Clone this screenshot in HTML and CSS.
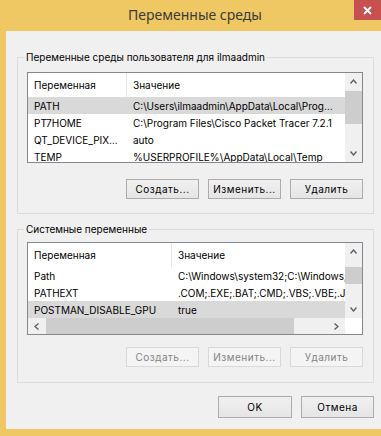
FILE: index.html
```html
<!DOCTYPE html>
<html>
<head>
    <title>Переменные среды</title>
    <link rel="stylesheet" href="styles.css">
</head>
<body>
    <div class="window">
        <div class="titlebar">
            <div class="title">Переменные среды</div>
            <div class="close">
                <svg width="9" height="9" viewBox="0 0 9 9"><path d="M1 1L8 8M8 1L1 8" stroke="#fff" stroke-width="1.8"/></svg>
            </div>
        </div>
        <div class="client">
            <fieldset class="group group-user">
                <legend>Переменные среды пользователя для ilmaadmin</legend>
                <div class="list list-user">
                    <div class="list-main">
                        <div class="list-body">
                            <div class="row head"><span class="c1">Переменная</span><span class="c2">Значение</span></div>
                            <div class="row selected"><span class="c1">PATH</span><span class="c2">C:\Users\ilmaadmin\AppData\Local\Programs\Microsoft VS Code\bin</span></div>
                            <div class="row"><span class="c1">PT7HOME</span><span class="c2">C:\Program Files\Cisco Packet Tracer 7.2.1</span></div>
                            <div class="row"><span class="c1">QT_DEVICE_PIXEL_RATIO</span><span class="c2">auto</span></div>
                            <div class="row"><span class="c1">TEMP</span><span class="c2">%USERPROFILE%\AppData\Local\Temp</span></div>
                        </div>
                        <div class="vscroll">
                            <div class="sbtn"><svg width="7" height="5" viewBox="0 0 7 5"><path d="M0.5 4.5L3.5 1L6.5 4.5" fill="none" stroke="#606060" stroke-width="1.4"/></svg></div>
                            <div class="track"><div class="thumb thumb-user"></div></div>
                            <div class="sbtn"><svg width="7" height="5" viewBox="0 0 7 5"><path d="M0.5 0.5L3.5 4L6.5 0.5" fill="none" stroke="#606060" stroke-width="1.4"/></svg></div>
                        </div>
                    </div>
                </div>
                <div class="buttons">
                    <button>Создать...</button>
                    <button>Изменить...</button>
                    <button>Удалить</button>
                </div>
            </fieldset>

            <fieldset class="group group-system">
                <legend>Системные переменные</legend>
                <div class="list list-system">
                    <div class="list-main">
                        <div class="list-body">
                            <div class="row head"><span class="c1">Переменная</span><span class="c2 wide">Значение</span></div>
                            <div class="row"><span class="c1">Path</span><span class="c2 wide">C:\Windows\system32;C:\Windows;C:\Windows\System32\Wbem</span></div>
                            <div class="row"><span class="c1">PATHEXT</span><span class="c2 wide">.COM;.EXE;.BAT;.CMD;.VBS;.VBE;.JS;.JSE;.WSF;.WSH;.MSC</span></div>
                            <div class="row selected"><span class="c1">POSTMAN_DISABLE_GPU</span><span class="c2 wide">true</span></div>
                        </div>
                        <div class="vscroll">
                            <div class="sbtn"><svg width="7" height="5" viewBox="0 0 7 5"><path d="M0.5 4.5L3.5 1L6.5 4.5" fill="none" stroke="#606060" stroke-width="1.4"/></svg></div>
                            <div class="track"><div class="thumb thumb-system"></div></div>
                            <div class="sbtn"><svg width="7" height="5" viewBox="0 0 7 5"><path d="M0.5 0.5L3.5 4L6.5 0.5" fill="none" stroke="#606060" stroke-width="1.4"/></svg></div>
                        </div>
                    </div>
                    <div class="hscroll">
                        <div class="sbtn"><svg width="5" height="7" viewBox="0 0 5 7"><path d="M4.5 0.5L1 3.5L4.5 6.5" fill="none" stroke="#606060" stroke-width="1.4"/></svg></div>
                        <div class="htrack"><div class="hthumb"></div></div>
                        <div class="sbtn"><svg width="5" height="7" viewBox="0 0 5 7"><path d="M0.5 0.5L4 3.5L0.5 6.5" fill="none" stroke="#606060" stroke-width="1.4"/></svg></div>
                        <div class="corner"></div>
                    </div>
                </div>
                <div class="buttons">
                    <button disabled>Создать...</button>
                    <button disabled>Изменить...</button>
                    <button disabled>Удалить</button>
                </div>
            </fieldset>

            <div class="dialog-buttons">
                <button class="ok">OK</button>
                <button>Отмена</button>
            </div>
        </div>
    </div>
</body>
</html>
```

FILE: styles.css
```css
body {
    margin: 0;
    background: #efc763;
    font-family: Inter, "Liberation Sans", sans-serif;
    font-size: 10px;
    color: #000;
}
.window {
    width: 381px;
    height: 436px;
    display: flex;
    flex-direction: column;
    background: #efc763;
}
.titlebar {
    height: 31px;
    display: flex;
    align-items: flex-start;
}
.title {
    flex: 1;
    padding-left: 36px;
    text-align: center;
    line-height: 30px;
    font-family: "Noto Sans", sans-serif;
    font-size: 14px;
    color: #3b3b3b;
}
.close {
    width: 27px;
    height: 20px;
    background: #c75050;
    display: flex;
    align-items: center;
    justify-content: center;
}
.client {
    flex: 1;
    margin: 0 0 7px 6px;
    padding: 20px 7px 0 11px;
    background: #f0f0f0;
    display: flex;
    flex-direction: column;
}
.group {
    margin: 0;
    padding: 9px 10px 14px 9px;
    border: 1px solid #dcdcdc;
    min-width: 0;
}
.group legend {
    margin-left: -3px;
    padding: 0 2px;
    line-height: 12px;
}
.group-system {
    margin-top: 9px;
    padding-top: 7px;
    padding-bottom: 15px;
}
.list {
    border: 1px solid #828790;
    background: #fff;
    display: flex;
    flex-direction: column;
    box-sizing: border-box;
    overflow: hidden;
}
.list-user {
    height: 91px;
}
.list-system {
    height: 93px;
}
.list-main {
    flex: 1;
    min-height: 0;
    display: flex;
}
.list-body {
    flex: 1;
    min-width: 0;
    overflow: hidden;
}
.row {
    display: flex;
    height: 17px;
    align-items: center;
    white-space: nowrap;
}
.row.head {
    height: 24px;
}
.row.selected {
    background: #d9d9d9;
}
.c1 {
    width: 99px;
    flex: none;
    padding: 0 5px 0 6px;
    box-sizing: border-box;
    overflow: hidden;
    text-overflow: ellipsis;
}
.list-system .c1 {
    width: 144px;
}
.head .c1 {
    border-right: 1px solid #e5e5e5;
    line-height: 24px;
}
.c2 {
    flex: 1;
    min-width: 0;
    padding: 0 9px 0 6px;
    overflow: hidden;
    text-overflow: ellipsis;
}
.c2.wide {
    padding-right: 0;
    text-overflow: clip;
}
.vscroll {
    width: 17px;
    flex: none;
    background: #f0f0f0;
    display: flex;
    flex-direction: column;
}
.sbtn {
    width: 17px;
    height: 17px;
    flex: none;
    display: flex;
    align-items: center;
    justify-content: center;
}
.track {
    flex: 1;
    padding-top: 1px;
}
.thumb {
    background: #cdcdcd;
}
.thumb-user {
    height: 33px;
}
.thumb-system {
    height: 17px;
    margin-top: 6px;
}
.hscroll {
    height: 16px;
    flex: none;
    display: flex;
    background: #f0f0f0;
}
.hscroll .sbtn {
    height: 16px;
}
.htrack {
    flex: 1;
    padding-left: 1px;
}
.hthumb {
    width: 248px;
    height: 100%;
    background: #cdcdcd;
}
.corner {
    width: 17px;
    background: #fff;
}
.buttons {
    display: flex;
    justify-content: flex-end;
    gap: 9px;
    margin-top: 16px;
}
.group-system .buttons {
    margin-top: 12px;
}
button {
    width: 73px;
    height: 20px;
    margin: 0;
    padding: 0;
    border: 1px solid #acacac;
    background: linear-gradient(#f0f0f0, #e5e5e5);
    font-family: Inter, "Liberation Sans", sans-serif;
    font-size: 10px;
    letter-spacing: 0.5px;
    color: #000;
}
button:disabled {
    border-color: #d9d9d9;
    background: #f4f4f4;
    color: #838383;
}
.dialog-buttons {
    display: flex;
    justify-content: flex-end;
    gap: 9px;
    margin-top: 13px;
}
.dialog-buttons button {
    height: 22px;
}
.dialog-buttons .ok {
    width: 74px;
}
```
